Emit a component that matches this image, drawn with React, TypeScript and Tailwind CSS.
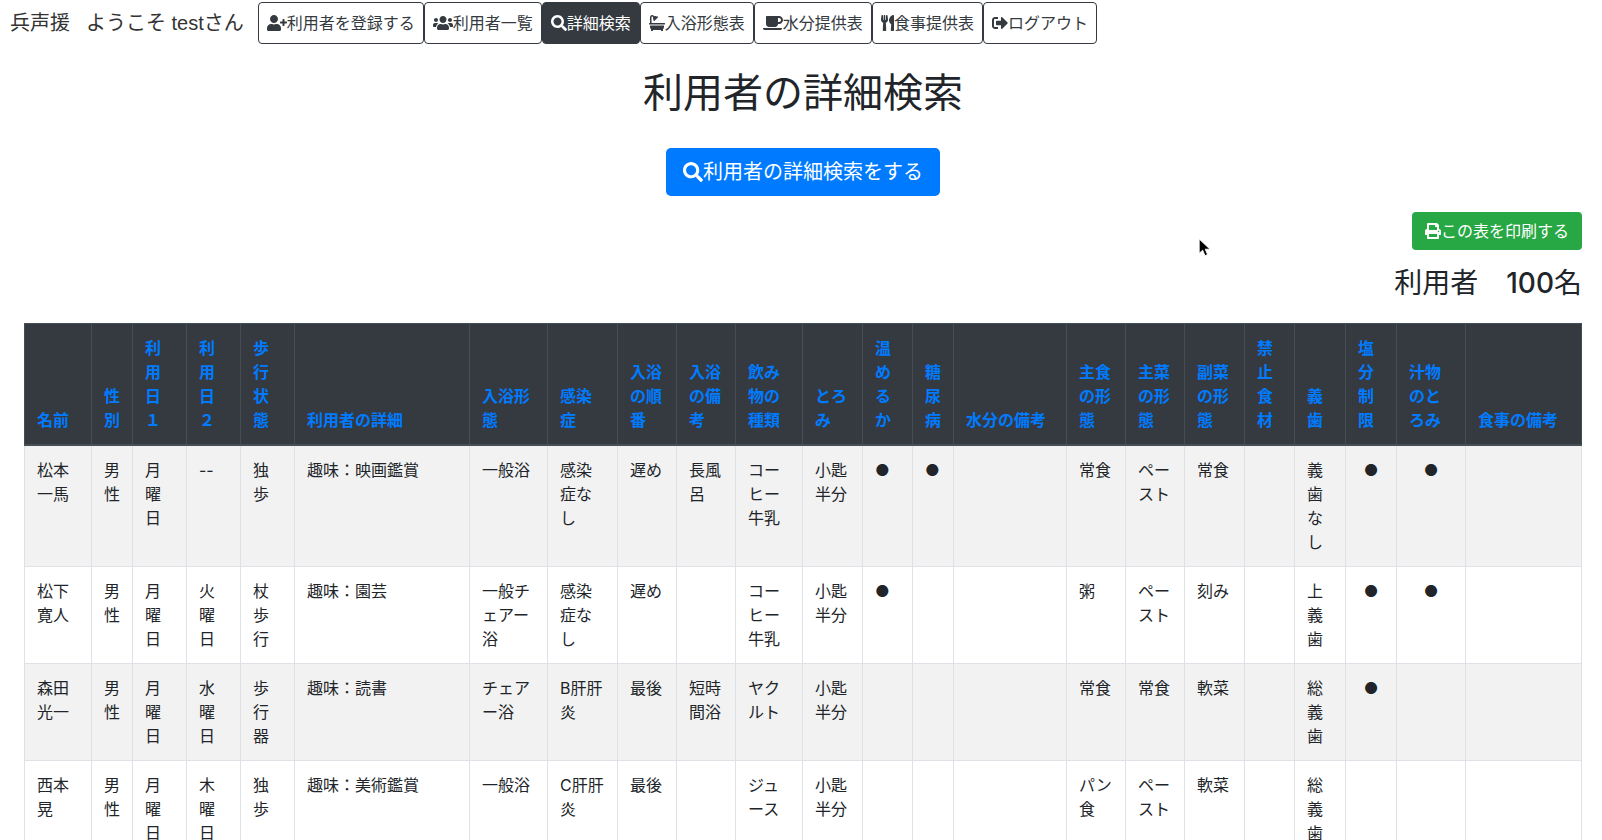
import {
  FaBath,
  FaCoffee,
  FaPrint,
  FaSearch,
  FaSignOutAlt,
  FaUserPlus,
  FaUsers,
  FaUtensils,
} from 'react-icons/fa';

const HEADERS = [
  '名前', '性別', '利用日１', '利用日２', '歩行状態', '利用者の詳細', '入浴形態', '感染症',
  '入浴の順番', '入浴の備考', '飲み物の種類', 'とろみ', '温めるか', '糖尿病', '水分の備考',
  '主食の形態', '主菜の形態', '副菜の形態', '禁止食材', '義歯', '塩分制限', '汁物のとろみ', '食事の備考',
];

const COL_CLASSES = [
  'w-[67px]', 'w-[41px]', 'w-[54px]', 'w-[54px]', 'w-[54px]', 'w-[175px]', 'w-[78px]', 'w-[70px]',
  'w-[59px]', 'w-[59px]', 'w-[67px]', 'w-[60px]', 'w-[50px]', 'w-[41px]', 'w-[113px]',
  'w-[59px]', 'w-[59px]', 'w-[60px]', 'w-[50px]', 'w-[51px]', 'w-[51px]', 'w-[69px]', 'w-[116px]',
];

const ROWS = [
  ['松本一馬', '男性', '月曜日', '--', '独歩', '趣味：映画鑑賞', '一般浴', '感染症なし', '遅め', '長風呂', 'コーヒー牛乳', '小匙半分', '●', '●', '', '常食', 'ペースト', '常食', '', '義歯なし', '●', '●', ''],
  ['松下寛人', '男性', '月曜日', '火曜日', '杖歩行', '趣味：園芸', '一般チェアー浴', '感染症なし', '遅め', '', 'コーヒー牛乳', '小匙半分', '●', '', '', '粥', 'ペースト', '刻み', '', '上義歯', '●', '●', ''],
  ['森田光一', '男性', '月曜日', '水曜日', '歩行器', '趣味：読書', 'チェアー浴', 'B肝肝炎', '最後', '短時間浴', 'ヤクルト', '小匙半分', '', '', '', '常食', '常食', '軟菜', '', '総義歯', '●', '', ''],
  ['西本晃', '男性', '月曜日', '木曜日', '独歩', '趣味：美術鑑賞', '一般浴', 'C肝肝炎', '最後', '', 'ジュース', '小匙半分', '', '', '', 'パン食', 'ペースト', '軟菜', '', '総義歯', '', '', ''],
];

// 塩分制限 and 汁物のとろみ have their dots centred
const CENTERED_COLUMNS = [20, 21];

const NAV_ITEMS = [
  { label: '利用者を登録する', icon: <FaUserPlus className="h-4 w-5" /> },
  { label: '利用者一覧', icon: <FaUsers className="h-4 w-5" /> },
  { label: '詳細検索', icon: <FaSearch className="h-4 w-4" />, active: true },
  { label: '入浴形態表', icon: <FaBath className="h-4 w-4" /> },
  { label: '水分提供表', icon: <FaCoffee className="h-4 w-5" /> },
  { label: '食事提供表', icon: <FaUtensils className="h-4 w-[13px]" /> },
  { label: 'ログアウト', icon: <FaSignOutAlt className="h-4 w-4" /> },
];

const App = () => {
  return (
    <div className="relative h-screen overflow-hidden bg-white font-['Inter','Noto_Sans_CJK_JP',sans-serif] text-base leading-6 text-[#212529]">
      {/* Top nav */}
      <nav className="flex items-center pl-[10px] pt-[2px]">
        <span className="mr-[14px] whitespace-pre font-['Liberation_Sans','Noto_Sans_CJK_JP',sans-serif] text-xl text-[#333333]">
          <span className="mr-4">兵声援</span>ようこそ testさん
        </span>
        {NAV_ITEMS.map((item) => (
          <button
            key={item.label}
            type="button"
            className={`flex h-[42px] items-center whitespace-nowrap rounded border border-[#343a40] px-2 ${
              item.active ? 'bg-[#343a40] text-white' : 'bg-white text-[#343a40]'
            }`}
          >
            {item.icon}
            {item.label}
          </button>
        ))}
      </nav>

      <main className="ml-6 mr-5">
        <h1 className="mt-[25px] text-center text-[40px] font-normal leading-[48px]">利用者の詳細検索</h1>

        <div className="mt-[31px] flex justify-center">
          <button
            type="button"
            className="flex h-12 items-center rounded-[5px] bg-[#007bff] px-[17px] text-xl leading-[30px] text-white"
          >
            <FaSearch className="h-5 w-5" />
            利用者の詳細検索をする
          </button>
        </div>

        <div className="mt-4 flex justify-end">
          <button type="button" className="flex h-[38px] items-center rounded bg-[#28a745] px-[13px] text-white">
            <FaPrint className="h-4 w-4" />
            この表を印刷する
          </button>
        </div>

        <h3 className="mt-4 whitespace-pre text-right text-[28px] font-normal leading-[34px]">
          利用者　<span className="font-medium">100</span>名
        </h3>

        {/* Users table */}
        <table className="mt-[23px] w-[1557px] table-fixed border-collapse">
          <colgroup>
            {COL_CLASSES.map((width, index) => (
              <col key={index} className={width} />
            ))}
          </colgroup>
          <thead className="bg-[#343a40]">
            <tr>
              {HEADERS.map((header) => (
                <th
                  key={header}
                  className="border border-b-2 border-[#454d55] p-3 text-left align-bottom font-bold text-[#007bff]"
                >
                  {header}
                </th>
              ))}
            </tr>
          </thead>
          <tbody>
            {ROWS.map((row, rowIndex) => (
              <tr key={row[0]} className={rowIndex % 2 === 0 ? 'bg-[#f2f2f2]' : 'bg-white'}>
                {row.map((cell, cellIndex) => (
                  <td
                    key={cellIndex}
                    className={`border border-[#dee2e6] p-3 align-top ${
                      CENTERED_COLUMNS.includes(cellIndex) ? 'text-center' : ''
                    }`}
                  >
                    {cell}
                  </td>
                ))}
              </tr>
            ))}
          </tbody>
        </table>
      </main>

      {/* Mouse pointer caught in the screenshot */}
      <svg className="absolute left-[1198px] top-[238px] h-[19px] w-[14px]" viewBox="0 0 13 18">
        <path d="M1 1v13.5l3.3-3 2.2 5.2 2.4-1-2.2-5.1h4.5z" fill="#000" stroke="#fff" strokeWidth="0.8" />
      </svg>
    </div>
  );
};

export default App;
